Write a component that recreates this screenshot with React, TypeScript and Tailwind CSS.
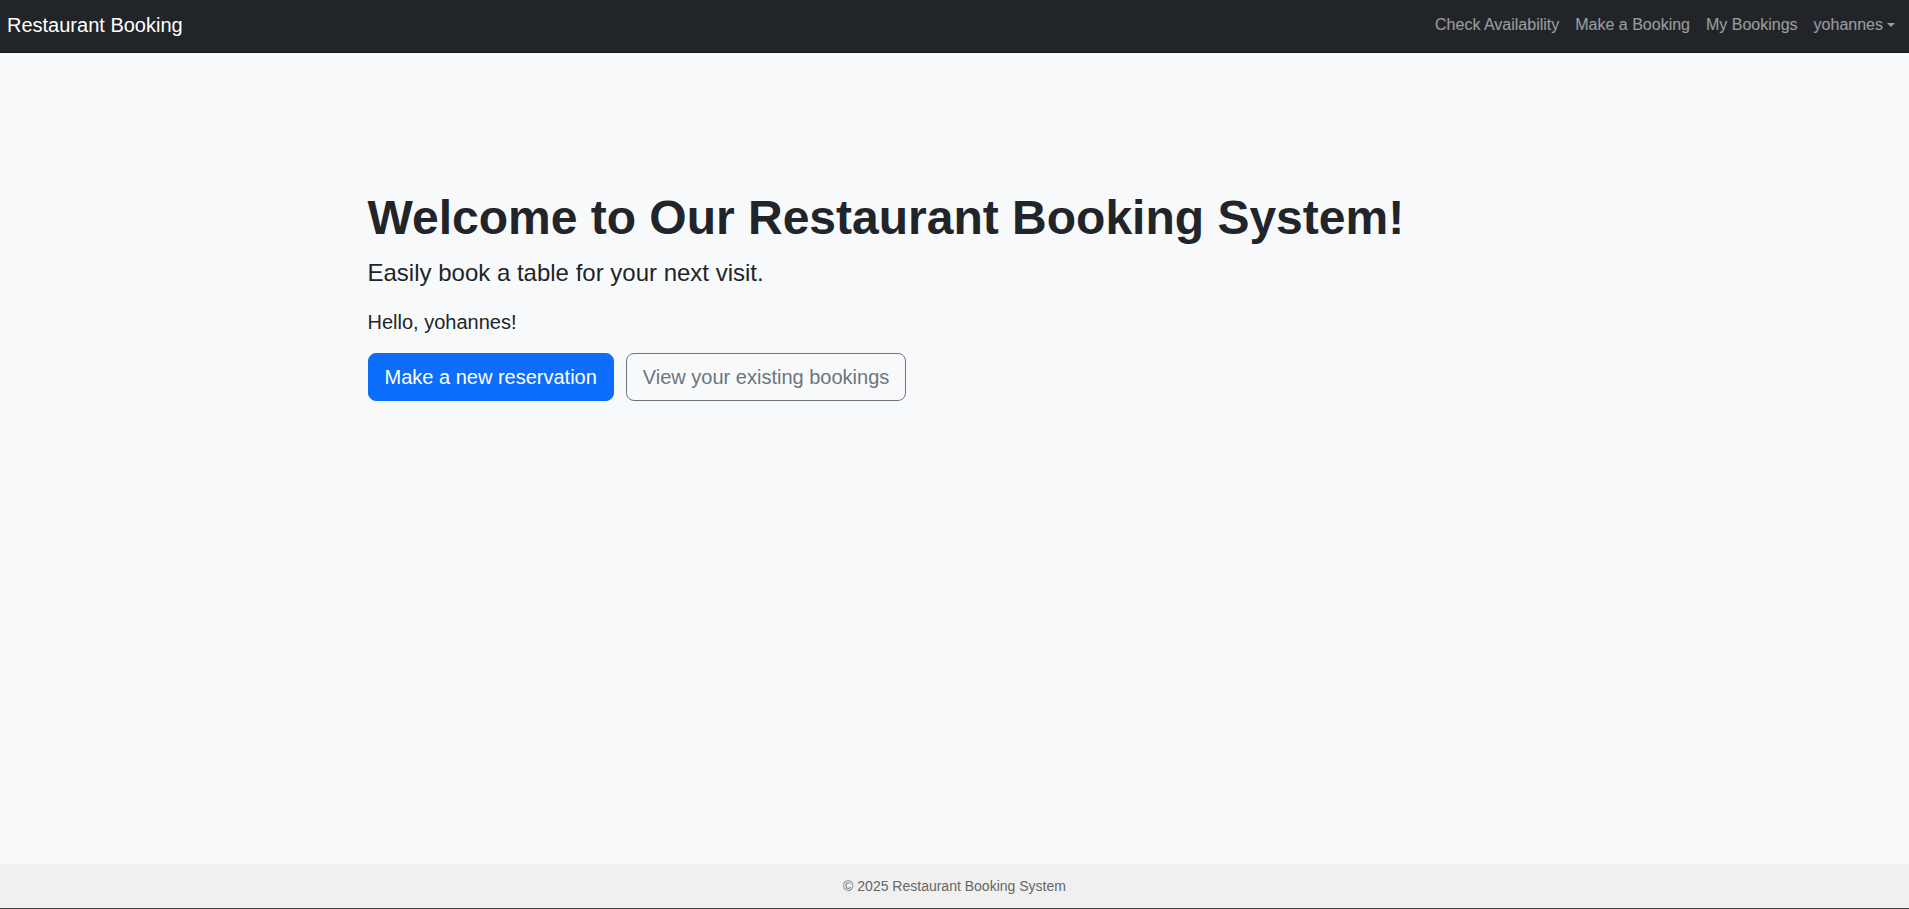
const navLinks = ["Check Availability", "Make a Booking", "My Bookings"];

export default function App() {
  return (
    <div className="flex min-h-screen flex-col bg-[#f8f9fb] font-['Liberation_Sans',Arial,sans-serif] text-[#212529]">
      <header>
        <nav className="flex items-center justify-between border-b border-[#16181b] bg-[#212529] pt-1.5 pr-1.5 pb-2 pl-[7px]">
          <a href="#" className="py-1 text-xl leading-[30px] text-white">
            Restaurant Booking
          </a>
          <div className="flex items-center text-base leading-6 text-white/55">
            {navLinks.map((label) => (
              <a key={label} href="#" className="px-2">
                {label}
              </a>
            ))}
            <button type="button" className="flex items-center gap-1 px-2">
              yohannes
              <span className="border-x-4 border-t-4 border-x-transparent border-t-current" />
            </button>
          </div>
        </nav>
      </header>

      <main className="mx-auto w-full max-w-[1200px] grow px-[13px] pt-[136px]">
        <h1 className="mb-2 text-5xl leading-[58px] font-bold">
          Welcome to Our Restaurant Booking System!
        </h1>
        <p className="mb-4 text-2xl leading-9">Easily book a table for your next visit.</p>
        <p className="mb-4 text-xl leading-[30px]">Hello, yohannes!</p>
        <div className="flex gap-3">
          <a href="#" className="rounded-lg border border-[#0d6efd] bg-[#0d6efd] px-4 py-2 text-xl leading-[30px] text-white">
            Make a new reservation
          </a>
          <a href="#" className="rounded-lg border border-[#6c757d] px-4 py-2 text-xl leading-[30px] text-[#6c757d]">
            View your existing bookings
          </a>
        </div>
      </main>

      <footer className="border-b border-[#444] bg-[#f0f0f0] py-3 text-center text-sm leading-5 text-[#666]">
        © 2025 Restaurant Booking System
      </footer>
    </div>
  );
}
